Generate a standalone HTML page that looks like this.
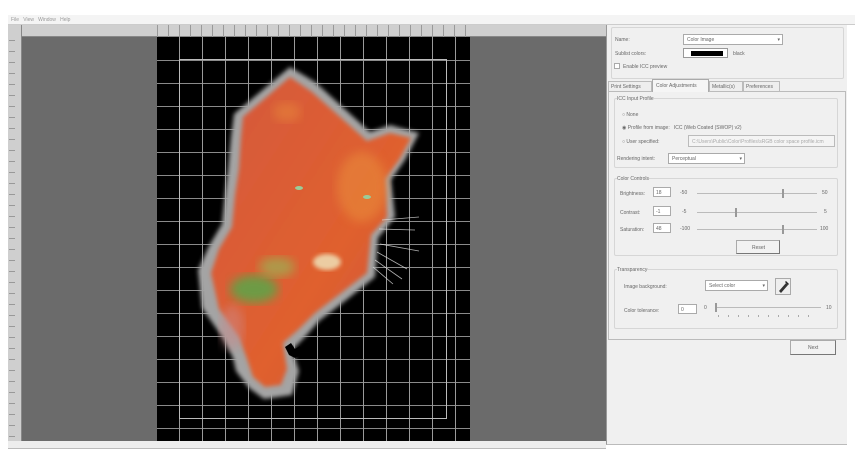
<!DOCTYPE html><html><head><style>
*{margin:0;padding:0;box-sizing:border-box}
body{width:855px;height:466px;background:#fff;position:relative;overflow:hidden;font-family:"Liberation Sans",sans-serif;font-size:5px;color:#555}
.a{position:absolute}
.gb{position:absolute;border:1px solid #d6d6d6;border-radius:2px}
.inp{position:absolute;background:#fff;border:1px solid #aaa}
.t{position:absolute;white-space:nowrap;color:#666}
</style></head><body>
<div class="a" style="left:8px;top:15px;width:847px;height:10px;background:#f4f4f4;border-bottom:1px solid #ccc"></div>
<div class="t" style="left:11px;top:17px;color:#999">File&nbsp;&nbsp; View&nbsp;&nbsp; Window&nbsp;&nbsp; Help</div>
<div class="a" style="left:8px;top:25px;width:598px;height:416px;background:#6b6b6b"></div>
<div class="a" style="left:8px;top:25px;width:598px;height:12px;background:#cfcfcf;border-bottom:1px solid #888"></div>
<div class="a" style="left:8px;top:25px;width:14px;height:416px;background:#cfcfcf;border-right:1px solid #888"></div>
<div class="a" style="left:157px;top:25px;width:313px;height:12px;background:repeating-linear-gradient(90deg,#999 0 1px,transparent 1px 11px)"></div>
<div class="a" style="left:9px;top:40px;width:6px;height:400px;background:repeating-linear-gradient(180deg,#999 0 1px,transparent 1px 11px)"></div>
<div class="a" style="left:8px;top:441px;width:598px;height:8px;background:#ededed;border-bottom:1px solid #bbb"></div>
<div class="a" style="left:157px;top:37px;width:313px;height:404px;background:#000;
background-image:repeating-linear-gradient(90deg,transparent 0 22px,#9a9a9a 22px 23px),repeating-linear-gradient(180deg,transparent 0 22px,#8a8a8a 22px 23px);background-position:0 0,0 1px"></div>
<div class="a" style="left:179px;top:59px;width:268px;height:360px;border:1px solid #bbb"></div>
<svg class="a" style="left:157px;top:37px" width="313" height="404">
<defs><filter id="b"><feGaussianBlur stdDeviation="2"/></filter><filter id="b2"><feGaussianBlur stdDeviation="5"/></filter>
<linearGradient id="g" x1="0" y1="0" x2="1" y2="1"><stop offset="0" stop-color="#d4583e"/><stop offset=".6" stop-color="#e0602e"/><stop offset="1" stop-color="#c8503a"/></linearGradient></defs>
<path filter="url(#b)" fill="#a4a4a4" d="M77 77L133 30L158 45L213 95L233 88L262 96L248 123L234 143L238 180L221 201L218 240L188 264L162 284L148 300L135 313L142 334L135 358L107 362L92 351L79 334L76 321L66 301L45 271L41 233L52 209L65 187L68 157L71 133L74 100Z"/>
<path filter="url(#b)" fill="url(#g)" d="M86 80L133 40L155 55L210 104L233 96L254 101L242 123L228 142L230 180L214 198L210 236L184 256L158 276L142 292L126 306L130 332L124 348L108 350L96 340L90 322L82 300L62 272L54 236L62 212L75 190L78 158L82 132L84 100Z"/>
<ellipse filter="url(#b2)" cx="97" cy="252" rx="24" ry="14" fill="#5aa64a" opacity=".85"/>
<ellipse filter="url(#b2)" cx="120" cy="230" rx="18" ry="10" fill="#8fc05a" opacity=".6"/>
<ellipse filter="url(#b)" cx="170" cy="225" rx="14" ry="8" fill="#f0e8c0" opacity=".8"/>
<ellipse filter="url(#b2)" cx="205" cy="150" rx="25" ry="35" fill="#e88a3a" opacity=".6"/>
<ellipse filter="url(#b2)" cx="130" cy="75" rx="14" ry="10" fill="#e88a3a" opacity=".5"/>
<ellipse filter="url(#b2)" cx="75" cy="290" rx="12" ry="22" fill="#c88" opacity=".5"/>
<g stroke="#ddd" stroke-width=".8" opacity=".8"><path d="M225 183L262 180M222 192L258 193M223 207L262 214M220 215L250 232M218 223L245 242M216 230L236 247"/></g>
<ellipse cx="142" cy="151" rx="4" ry="2" fill="#9c9"/><ellipse cx="210" cy="160" rx="4" ry="2" fill="#9c9"/>
<path d="M128 310l6 -4 4 6 5 -3 3 8 -8 4 -6 -3z" fill="#000"/>
</svg>
<div class="a" style="left:606px;top:25px;width:241px;height:420px;background:#f0f0f0;border-left:1px solid #999;border-bottom:1px solid #bbb"></div>
<div class="gb" style="left:611px;top:27px;width:233px;height:52px"></div>
<div class="t" style="left:615px;top:37px">Name:</div>
<div class="inp" style="left:683px;top:34px;width:100px;height:11px"><span class="t" style="left:3px;top:2px">Color Image</span><span class="t" style="right:2px;top:2px">▾</span></div>
<div class="t" style="left:615px;top:51px">Sublist colors:</div>
<div class="a" style="left:683px;top:48px;width:45px;height:10px;border:1px solid #999;background:#fff"><div class="a" style="left:7px;top:2px;width:32px;height:5px;background:#000"></div></div>
<div class="t" style="left:733px;top:51px">black</div>
<div class="inp" style="left:614px;top:63px;width:6px;height:6px"></div><div class="t" style="left:623px;top:64px">Enable ICC preview</div>
<div class="a" style="left:608px;top:91px;width:238px;height:249px;border:1px solid #bbb;background:#f0f0f0"></div>
<div class="a" style="left:608px;top:81px;width:44px;height:11px;border:1px solid #bbb;background:#eee"><span class="t" style="left:2px;top:2px">Print Settings</span></div>
<div class="a" style="left:652px;top:79px;width:57px;height:13px;border:1px solid #aaa;border-bottom:none;background:#f5f5f5"><span class="t" style="left:3px;top:3px">Color Adjustments</span></div>
<div class="a" style="left:709px;top:81px;width:34px;height:11px;border:1px solid #bbb;background:#eee"><span class="t" style="left:2px;top:2px">Metallic(s)</span></div>
<div class="a" style="left:743px;top:81px;width:37px;height:11px;border:1px solid #bbb;background:#eee"><span class="t" style="left:2px;top:2px">Preferences</span></div>
<div class="gb" style="left:614px;top:98px;width:224px;height:70px"></div>
<div class="t" style="left:617px;top:96px;background:#f0f0f0">ICC Input Profile</div>
<div class="t" style="left:622px;top:112px">○ None</div>
<div class="t" style="left:622px;top:125px">◉ Profile from image:&nbsp;&nbsp; ICC (Web Coated (SWOP) v2)</div>
<div class="t" style="left:622px;top:139px">○ User specified:</div>
<div class="inp" style="left:688px;top:135px;width:147px;height:12px;background:#f4f4f4;border-color:#bbb"><span class="t" style="left:3px;top:3px;color:#aaa">C:\Users\Public\Color\Profiles\sRGB color space profile.icm</span></div>
<div class="t" style="left:617px;top:156px">Rendering intent:</div>
<div class="inp" style="left:668px;top:153px;width:77px;height:11px"><span class="t" style="left:3px;top:2px">Perceptual</span><span class="t" style="right:2px;top:2px">▾</span></div>
<div class="gb" style="left:614px;top:178px;width:224px;height:78px"></div>
<div class="t" style="left:617px;top:176px;background:#f0f0f0">Color Controls</div>
<div class="t" style="left:620px;top:191px">Brightness:</div><div class="inp" style="left:653px;top:187px;width:18px;height:10px"><span class="t" style="left:2px;top:2px">18</span></div>
<div class="t" style="left:620px;top:210px">Contrast:</div><div class="inp" style="left:653px;top:206px;width:18px;height:10px"><span class="t" style="left:2px;top:2px">-1</span></div>
<div class="t" style="left:620px;top:227px">Saturation:</div><div class="inp" style="left:653px;top:223px;width:18px;height:10px"><span class="t" style="left:2px;top:2px">48</span></div>
<div class="t" style="left:680px;top:190px">-50</div><div class="t" style="left:682px;top:209px">-5</div><div class="t" style="left:680px;top:226px">-100</div>
<div class="t" style="left:822px;top:190px">50</div><div class="t" style="left:824px;top:209px">5</div><div class="t" style="left:820px;top:226px">100</div>
<div class="a" style="left:697px;top:193px;width:120px;height:1px;background:#bbb"></div><div class="a" style="left:782px;top:189px;width:2px;height:9px;background:#999"></div>
<div class="a" style="left:697px;top:212px;width:120px;height:1px;background:#bbb"></div><div class="a" style="left:735px;top:208px;width:2px;height:9px;background:#999"></div>
<div class="a" style="left:697px;top:229px;width:120px;height:1px;background:#bbb"></div><div class="a" style="left:782px;top:225px;width:2px;height:9px;background:#999"></div>
<div class="a" style="left:736px;top:240px;width:44px;height:14px;border:1px solid #aaa;border-right-color:#777;border-bottom-color:#777;background:#f2f2f2"><span class="t" style="left:15px;top:4px">Reset</span></div>
<div class="gb" style="left:614px;top:269px;width:224px;height:60px"></div>
<div class="t" style="left:617px;top:267px;background:#f0f0f0">Transparency</div>
<div class="t" style="left:624px;top:284px">Image background:</div>
<div class="inp" style="left:705px;top:280px;width:63px;height:11px"><span class="t" style="left:3px;top:2px">Select color</span><span class="t" style="right:2px;top:2px">▾</span></div>
<div class="a" style="left:775px;top:278px;width:16px;height:17px;border:1px solid #aaa;background:#eee"></div>
<svg class="a" style="left:776px;top:279px" width="15" height="15"><path d="M3 12L10 4l2 2-7 8z" fill="#333"/><path d="M10 2l3 3-1 1-3-3z" fill="#222"/></svg>
<div class="t" style="left:624px;top:308px">Color tolerance:</div>
<div class="inp" style="left:678px;top:304px;width:19px;height:10px"><span class="t" style="left:2px;top:2px">0</span></div>
<div class="t" style="left:704px;top:305px">0</div><div class="t" style="left:826px;top:305px">10</div>
<div class="a" style="left:716px;top:307px;width:105px;height:1px;background:#bbb"></div><div class="a" style="left:715px;top:303px;width:2px;height:9px;background:#999"></div>
<div class="a" style="left:718px;top:315px;width:100px;height:2px;background:repeating-linear-gradient(90deg,#aaa 0 1px,transparent 1px 10px)"></div>
<div class="a" style="left:790px;top:340px;width:46px;height:15px;border:1px solid #aaa;border-right-color:#777;border-bottom-color:#777;background:#f2f2f2"><span class="t" style="left:17px;top:4px">Next</span></div>
</body></html>
